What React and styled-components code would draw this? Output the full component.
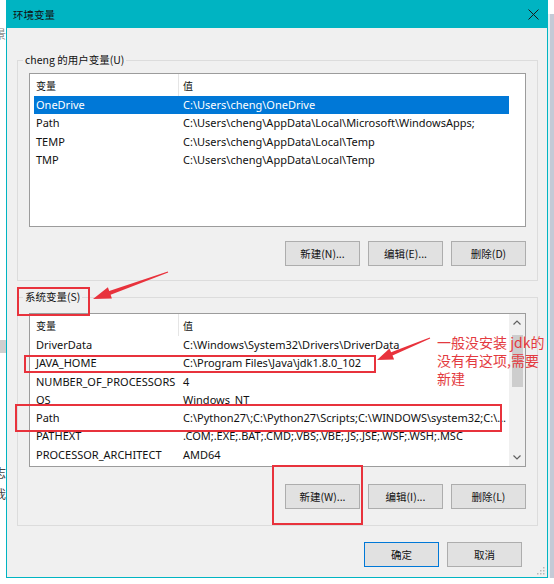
import React from "react";
import styled, { createGlobalStyle } from "styled-components";

const Global = createGlobalStyle`
  html, body { margin: 0; padding: 0; background: #fff; }
  body {
    width: 554px; height: 584px; overflow: hidden;
    font-family: "Noto Sans", "Noto Sans CJK SC", sans-serif;
  }
`;

const TEAL = "#00b4c2";
const RED = "#e8323c";

const Page = styled.div`
  position: relative;
  width: 554px;
  height: 584px;
  display: flex;
  align-items: flex-start;
  background: #fff;
  overflow: hidden;
`;

const SideStrip = styled.div`
  width: 6px;
  height: 584px;
  flex-shrink: 0;
  overflow: hidden;
  display: flex;
  flex-direction: column;
  align-items: flex-end;
`;

const Glyph = styled.span`
  display: block;
  margin-top: ${(p) => p.$top}px;
  font-family: "Noto Sans CJK SC", sans-serif;
  font-size: 12px;
  line-height: 14px;
  color: ${(p) => p.$color || "#555"};
  white-space: nowrap;
`;

const GreyBlock = styled.div`
  margin-top: ${(p) => p.$top}px;
  width: 6px;
  height: 13px;
  background: #cfcfcf;
`;

const RightStrip = styled.div`
  width: 6px;
  flex-shrink: 0;
  display: flex;
  flex-direction: column;
`;

const RightTop = styled.div`
  height: 14px;
  background: #fff;
`;

const RightMid = styled.div`
  height: 564px;
  background: #c4cad6;
  border-left: 2px solid #e4f1f4;
`;

const Dialog = styled.div`
  position: relative;
  width: 542px;
  height: 578px;
  flex-shrink: 0;
  box-sizing: border-box;
  display: flex;
  flex-direction: column;
  background: #f0f0f0;
  border: 1px solid ${TEAL};
  border-top: none;
`;

const TitleBar = styled.div`
  height: 28px;
  flex-shrink: 0;
  display: flex;
  align-items: center;
  justify-content: space-between;
  background: ${TEAL};
  padding-left: 7px;
  margin: 0 -1px;
`;

const TitleText = styled.span`
  font-family: "Noto Sans CJK SC", sans-serif;
  font-size: 10.5px;
  color: #111;
`;

const CloseBtn = styled.div`
  width: 30px;
  height: 28px;
  display: flex;
  align-items: center;
  justify-content: center;
`;

const Body = styled.div`
  display: flex;
  flex-direction: column;
  padding: 32px 9px 0 10px;
`;

const Group = styled.div`
  display: flex;
  flex-direction: column;
  border: 1px solid #dcdcdc;
  padding: 0 11px ${(p) => p.$bottom}px 11px;
  margin-top: ${(p) => p.$top}px;
`;

const GroupLabel = styled.div`
  align-self: flex-start;
  margin: -9px 0 0 -6px;
  padding: 0 2px;
  height: 16px;
  line-height: 16px;
  background: #f0f0f0;
  font-family: "Noto Sans CJK SC", sans-serif;
  font-size: 10.5px;
  color: #111;
`;

const ListBox = styled.div`
  margin-top: ${(p) => p.$top}px;
  height: 154px;
  box-sizing: border-box;
  border: 1px solid #9c9c9c;
  background: #fff;
  display: flex;
  overflow: hidden;
`;

const ListContent = styled.div`
  flex: 1;
  min-width: 0;
  padding-left: 4px;
  padding-right: ${(p) => (p.$scroll ? 0 : 16)}px;
  display: flex;
  flex-direction: column;
`;

const HeaderRow = styled.div`
  display: grid;
  grid-template-columns: 145px 1fr;
  height: 22px;
  flex-shrink: 0;
`;

const HeaderCell = styled.div`
  display: flex;
  align-items: center;
  padding-left: ${(p) => (p.$first ? 2 : 4)}px;
  border-right: ${(p) => (p.$first ? "1px solid #e5e5e5" : "none")};
  font-family: "Noto Sans CJK SC", sans-serif;
  font-size: 10px;
  color: #111;
`;

const Row = styled.div`
  display: grid;
  grid-template-columns: 145px 1fr;
  height: 18.3px;
  flex-shrink: 0;
  line-height: 18.3px;
  font-size: 11px;
  background: ${(p) => (p.$selected ? "#0078d7" : "transparent")};
  color: ${(p) => (p.$selected ? "#fff" : "#111")};
`;

const Cell = styled.div`
  padding-left: ${(p) => (p.$first ? 2 : 4)}px;
  white-space: nowrap;
  overflow: hidden;
`;

const ScrollBar = styled.div`
  width: 16px;
  flex-shrink: 0;
  display: flex;
  flex-direction: column;
  background: #f0f0f0;
`;

const ScrollArrow = styled.div`
  height: 17px;
  display: flex;
  align-items: center;
  justify-content: center;
`;

const ScrollTrack = styled.div`
  flex: 1;
  display: flex;
  flex-direction: column;
`;

const Thumb = styled.div`
  margin: 4px 2px 0 3px;
  height: 52px;
  background: #cdcdcd;
`;

const ButtonRow = styled.div`
  display: flex;
  justify-content: flex-end;
  gap: 8px;
  margin-top: ${(p) => p.$top}px;
  margin-right: ${(p) => p.$right || 0}px;
`;

const Button = styled.div`
  width: 75px;
  height: 25px;
  box-sizing: border-box;
  display: flex;
  align-items: center;
  justify-content: center;
  background: #e1e1e1;
  border: 1px solid ${(p) => (p.$primary ? "#0078d7" : "#adadad")};
  font-family: "Noto Sans CJK SC", sans-serif;
  font-size: 10.5px;
  color: #111;
`;

const Grip = styled.svg`
  position: absolute;
  right: 2px;
  bottom: 2px;
`;

const Overlay = styled.svg`
  position: absolute;
  left: 0;
  top: 0;
  pointer-events: none;
`;

const Note = styled.div`
  position: absolute;
  left: 437px;
  top: 333px;
  font-family: "Noto Sans CJK SC", sans-serif;
  font-size: 14px;
  line-height: 18px;
  color: #e33a40;
  white-space: nowrap;
`;

const userVars = [
  { name: "OneDrive", value: "C:\\Users\\cheng\\OneDrive", selected: true },
  { name: "Path", value: "C:\\Users\\cheng\\AppData\\Local\\Microsoft\\WindowsApps;" },
  { name: "TEMP", value: "C:\\Users\\cheng\\AppData\\Local\\Temp" },
  { name: "TMP", value: "C:\\Users\\cheng\\AppData\\Local\\Temp" },
];

const sysVars = [
  { name: "DriverData", value: "C:\\Windows\\System32\\Drivers\\DriverData" },
  { name: "JAVA_HOME", value: "C:\\Program Files\\Java\\jdk1.8.0_102" },
  { name: "NUMBER_OF_PROCESSORS", value: "4" },
  { name: "OS", value: "Windows_NT" },
  { name: "Path", value: "C:\\Python27\\;C:\\Python27\\Scripts;C:\\WINDOWS\\system32;C:\\..." },
  { name: "PATHEXT", value: ".COM;.EXE;.BAT;.CMD;.VBS;.VBE;.JS;.JSE;.WSF;.WSH;.MSC" },
  { name: "PROCESSOR_ARCHITECT", value: "AMD64" },
];

function VarList({ rows, top, scroll }) {
  return (
    <ListBox $top={top}>
      <ListContent $scroll={scroll}>
        <HeaderRow>
          <HeaderCell $first>变量</HeaderCell>
          <HeaderCell>值</HeaderCell>
        </HeaderRow>
        {rows.map((r) => (
          <Row key={r.name} $selected={r.selected}>
            <Cell $first>{r.name}</Cell>
            <Cell>{r.value}</Cell>
          </Row>
        ))}
      </ListContent>
      {scroll && (
        <ScrollBar>
          <ScrollArrow>
            <svg width="8" height="5" viewBox="0 0 8 5">
              <path d="M0.5 4.5 L4 1 L7.5 4.5" fill="none" stroke="#606060" strokeWidth="1.2" />
            </svg>
          </ScrollArrow>
          <ScrollTrack>
            <Thumb />
          </ScrollTrack>
          <ScrollArrow>
            <svg width="8" height="5" viewBox="0 0 8 5">
              <path d="M0.5 0.5 L4 4 L7.5 0.5" fill="none" stroke="#606060" strokeWidth="1.2" />
            </svg>
          </ScrollArrow>
        </ScrollBar>
      )}
    </ListBox>
  );
}

export default function App() {
  return (
    <>
      <Global />
      <Page>
        <SideStrip>
          <Glyph $top={27} $color="#8a8a8a">景</Glyph>
          <GreyBlock $top={299} />
          <Glyph $top={113} $color="#444">志</Glyph>
          <Glyph $top={7} $color="#444">我</Glyph>
        </SideStrip>
        <Dialog>
          <TitleBar>
            <TitleText>环境变量</TitleText>
            <CloseBtn>
              <svg width="11" height="11" viewBox="0 0 11 11">
                <path d="M0.5 0.5 L10.5 10.5 M10.5 0.5 L0.5 10.5" stroke="#1a1a1a" strokeWidth="1" />
              </svg>
            </CloseBtn>
          </TitleBar>
          <Body>
            <Group $top={0} $bottom={14}>
              <GroupLabel>cheng 的用户变量(U)</GroupLabel>
              <VarList rows={userVars} top={5} />
              <ButtonRow $top={14}>
                <Button>新建(N)...</Button>
                <Button>编辑(E)...</Button>
                <Button>删除(D)</Button>
              </ButtonRow>
            </Group>
            <Group $top={16} $bottom={16}>
              <GroupLabel>系统变量(S)</GroupLabel>
              <VarList rows={sysVars} top={8} scroll />
              <ButtonRow $top={17}>
                <Button>新建(W)...</Button>
                <Button>编辑(I)...</Button>
                <Button>删除(L)</Button>
              </ButtonRow>
            </Group>
            <ButtonRow $top={16} $right={16}>
              <Button $primary>确定</Button>
              <Button>取消</Button>
            </ButtonRow>
          </Body>
          <Grip width="9" height="9" viewBox="0 0 9 9">
            {[
              [7, 1], [7, 4], [4, 4], [7, 7], [4, 7], [1, 7],
            ].map(([x, y]) => (
              <rect key={`${x}-${y}`} x={x} y={y} width="1.5" height="1.5" fill="#b8b8b8" />
            ))}
          </Grip>
        </Dialog>
        <RightStrip>
          <RightTop />
          <RightMid />
        </RightStrip>
        <Overlay width="554" height="584" viewBox="0 0 554 584">
          <g fill="none" stroke={RED} strokeWidth="2">
            <rect x="18" y="288" width="71" height="27" />
            <rect x="25" y="356" width="350" height="16" />
            <rect x="16" y="405" width="485" height="26" />
            <rect x="273" y="466" width="89" height="58" />
          </g>
          <polygon
            fill={RED}
            points="93,299 111.9,298.5 110.6,294.8 168.2,272.5 167.8,271.5 109.2,291 107.9,287.3"
          />
          <polygon
            fill={RED}
            points="377,360 394.1,359.4 392.5,355.6 430.2,338.5 429.8,337.5 391.1,352.2 389.5,348.4"
          />
        </Overlay>
        <Note>
          一般没安装 jdk的
          <br />
          没有有这项,需要
          <br />
          新建
        </Note>
      </Page>
    </>
  );
}
